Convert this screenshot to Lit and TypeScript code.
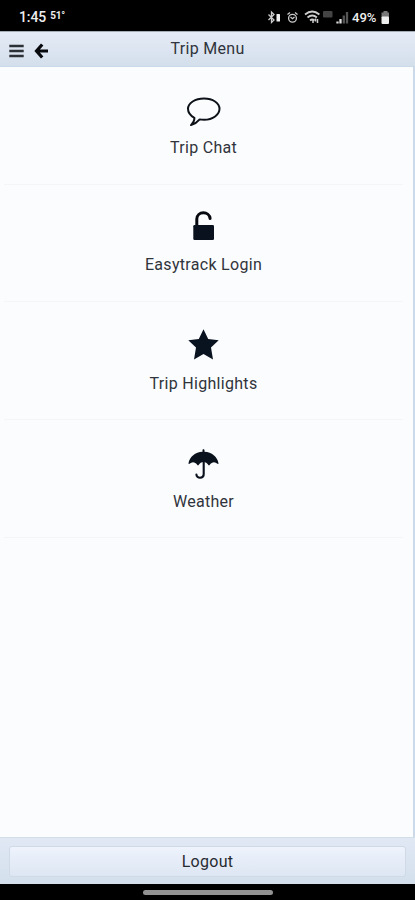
import { LitElement, html, css, svg } from "lit";
import { customElement } from "lit/decorators.js";

const icons = {
  chat: svg`<path d="M17 3.500C25.800 3.500 32.500 8 32.500 13.800S26 24.800 17 24.800c-1.600 0-3-.1-4.300-.4-2.100 2.500-4.900 4.600-8.700 5.700 2.300-2.400 3.600-4.400 3.400-7.300C3.600 20.800 1 17.600 1 13.800 1 8 8.200 3.500 17 3.500Z" fill="none" stroke="#0d1118" stroke-width="2" stroke-linejoin="round"/>`,
  lock: svg`<path d="M9.800 13V6c0-3.700 3-6.200 6.600-6.200 3.400 0 6.300 2.400 6.700 5.700" fill="none" stroke="#05080f" stroke-width="3" stroke-linecap="round"/><rect x="6.300" y="12" width="20.700" height="15" rx="1.300" fill="#09111f"/>`,
  star: svg`<path d="M16.500 -.7l4.700 9.800 10.500 1.200-7.700 7.300 2 11.800-9.500-5.300L7 29.400l2-11.800-7.700-7.300 10.500-1.200Z" fill="#09121f"/>`,
  umbrella: svg`<path d="M15.500 2.800V1.300c0-1.400 2-1.400 2 0v1.500C24.800 3.300 30.200 7.600 31.500 14.300c.1.800-.5 1-1 .5-2.700-2.400-5.600-2-7.900 1.300-.3.500-.9.500-1.200 0-1.400-2.100-2.800-3-4.900-3s-3.500.9-4.900 3c-.3.500-.9.500-1.200 0-2.300-3.300-5.200-3.700-7.900-1.300-.5.500-1.100.3-1-.5C2.800 7.600 8.200 3.300 15.500 2.800Z" fill="#09111c"/><path d="M16.700 13v12.300c0 4.500-7.300 4.500-7.300.3" fill="none" stroke="#09111c" stroke-width="2.100" stroke-linecap="round"/>`,
};

const entries = [
  { name: "Trip Chat", icon: icons.chat, cls: "chat" },
  { name: "Easytrack Login", icon: icons.lock, cls: "login" },
  { name: "Trip Highlights", icon: icons.star, cls: "highlights" },
  { name: "Weather", icon: icons.umbrella, cls: "weather" },
];

@customElement("app-root")
export class AppRoot extends LitElement {
  static styles = css`
    :host { display: flex; flex-direction: column; height: 900px; width: 415px; overflow: hidden; background: #fbfcfe; color: #30343b; font: 16px/20px Roboto, sans-serif; letter-spacing: .3px; }
    * { box-sizing: border-box; }
    svg { display: block; flex: none; overflow: visible; }
    .status { flex: none; height: 31px; background: #000; color: #eee; display: flex; align-items: center; justify-content: space-between; padding: 3px 20px 0 19px; }
    .time { display: flex; align-items: center; gap: 4px; font-weight: 500; font-size: 14px; letter-spacing: -.1px; }
    .temp { font-size: 10px; font-weight: 700; margin-top: -3px; letter-spacing: -.2px; }
    .percent { font: 500 13.5px Roboto, sans-serif; letter-spacing: 0; }
    header { flex: none; height: 36px; display: grid; grid-template-columns: 60px 1fr 60px; align-items: center; background: linear-gradient(#e5ebf6, #d4dfec); border-top: 1px solid #a5acb6; border-bottom: 1px solid #cbdaea; }
    .title { text-align: center; }
    .tools { display: flex; align-items: center; padding: 4px 0 0 9px; gap: 10px; }
    main { flex: 1; border-right: 2px solid #ccd9ea; padding: 0 10px 0 4px; }
    .row { height: 118px; border-bottom: 1px solid #f3f5f7; display: flex; flex-direction: column; align-items: center; padding-top: 28px; gap: 12px; }
    .row.login { height: 117px; gap: 11px; }
    .row.highlights { gap: 13px; }
    .row.weather { padding-top: 29px; }
    .label { white-space: nowrap; }
    footer { flex: none; height: 47px; padding: 8px 9px; background: linear-gradient(#e0e8f4, #d3e0ec); border-top: 1px solid #d3deeb; }
    .logout { display: block; width: 100%; height: 31px; border: 1px solid #d0dae6; border-radius: 3px; background: linear-gradient(#eef3fc, #dde6f3); font: inherit; letter-spacing: inherit; color: #272b32; padding: 0; }
    .nav { flex: none; height: 16px; background: #000; display: flex; justify-content: center; padding-top: 6px; }
    .pill { width: 130px; height: 5px; border-radius: 3px; background: #929292; }
  `;

  render() {
    return html`
      <div class="status">
        <div class="time"><span>1:45</span><span class="temp">51°</span></div>
        <svg width="128" height="20" viewBox="267 6 128 20" fill="none" stroke="#ccc" stroke-width="1.300">
          <path d="M268.500 13.500l5.500 5.500-2.500 2.500V11l2.500 2.500-5.500 5.500"/>
          <rect x="276.500" y="13" width="3.500" height="7.500" rx=".5" fill="#eee" stroke="none"/>
          <circle cx="292.500" cy="17.200" r="3.900"/><path d="M287.500 13.500l2.500-2M297.500 13.500l-2.500-2M290.500 16l2 1.700 2-1.700"/>
          <path d="M305 13.500q7.200-6 14.400 0M307.500 16.500q4.700-4 9.400 0M310 19.500q2.200-2 4.500 0" stroke-width="1.800"/><path d="M313 18v4M315.500 20.500v-3M317.500 18v4" stroke-width="1.500"/>
          <rect x="323" y="10" width="9.500" height="6.500" rx="1" fill="#444" stroke="none"/>
          <path d="M337.500 22.500v-2M340.500 22.500v-4.500" stroke="#ddd" stroke-width="2.300"/><path d="M343.800 22.500v-8M347 22.500V11" stroke="#555" stroke-width="2.300"/>
          <text class="percent" x="352" y="21.300" fill="#eee" stroke="none" textLength="24.500" lengthAdjust="spacingAndGlyphs">49%</text>
          <path d="M383.500 10h4v1.500h1.500v5h-7.500v-5h2Z" fill="#777" stroke="none"/><rect x="381.500" y="15.500" width="7.500" height="7.500" rx="1" fill="#eee" stroke="none"/>
        </svg>
      </div>
      <header>
        <div class="tools">
          <svg width="15" height="14" viewBox="0 0 15 14"><path d="M.3 2h14.400M.3 7h14.400M.3 12h14.400" stroke="#2c3037" stroke-width="2.300"/></svg>
          <svg width="15" height="16" viewBox="0 0 15 16"><path d="M8.200 1.500L2.500 8l5.700 6.500M3 8H14" fill="none" stroke="#07090d" stroke-width="3.200"/></svg>
        </div>
        <div class="title">Trip Menu</div>
      </header>
      <main>
        ${entries.map((e) => html`<div class="row ${e.cls}"><svg width="33" height="31" viewBox="0 0 33 31">${e.icon}</svg><div class="label">${e.name}</div></div>`)}
      </main>
      <footer><button class="logout">Logout</button></footer>
      <div class="nav"><div class="pill"></div></div>
    `;
  }
}
